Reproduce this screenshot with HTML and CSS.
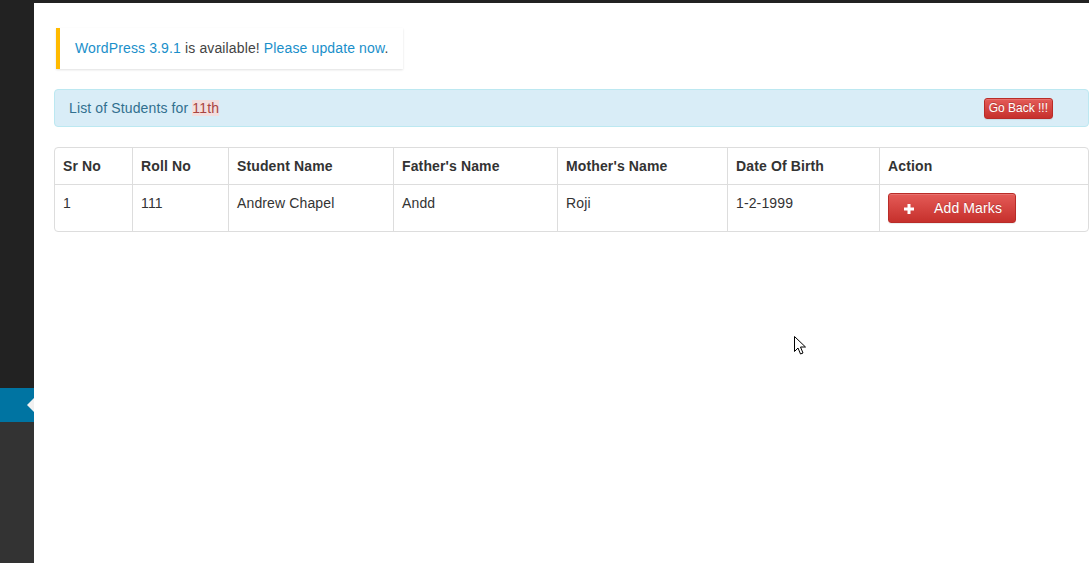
FILE: index.html
```html
<!DOCTYPE html>
<html>
<head>
<meta charset="utf-8">
<link rel="stylesheet" href="styles.css">
</head>
<body>
<div class="layout">
  <aside class="sidebar">
    <div class="menu-top"></div>
    <div class="menu-current"><span class="menu-arrow"></span></div>
    <div class="menu-rest"></div>
  </aside>
  <main class="main">
    <div class="notice"><a class="link">WordPress 3.9.1</a> is available! <a class="link">Please update now</a>.</div>
    <div class="alert">
      <span>List of Students for <span class="grade">11th</span></span>
      <button class="btn btn-xs">Go Back !!!</button>
    </div>
    <table class="students">
      <colgroup>
        <col class="c1"><col class="c2"><col class="c3"><col class="c4"><col class="c5"><col class="c6"><col class="c7">
      </colgroup>
      <thead>
        <tr>
          <th>Sr No</th><th>Roll No</th><th>Student Name</th><th>Father's Name</th><th>Mother's Name</th><th>Date Of Birth</th><th>Action</th>
        </tr>
      </thead>
      <tbody>
        <tr>
          <td>1</td><td>111</td><td>Andrew Chapel</td><td>Andd</td><td>Roji</td><td>1-2-1999</td>
          <td><button class="btn btn-add"><svg class="plus" width="10" height="10" viewBox="0 0 10 10"><rect x="3.5" y="0" width="3" height="10" fill="#fff"/><rect x="0" y="3.5" width="10" height="3" fill="#fff"/></svg>Add Marks</button></td>
        </tr>
      </tbody>
    </table>
    <svg class="cursor" width="13" height="20" viewBox="0 0 13 20">
      <path d="M0.5 0.5 L0.5 15.5 L4 12 L6.5 18 L9 17 L6.5 11 L11.5 11 Z" fill="#fff" stroke="#000" stroke-width="1"/>
    </svg>
  </main>
</div>
</body>
</html>
```
FILE: styles.css
```css
html, body {
  margin: 0;
  padding: 0;
  height: 100%;
}
body {
  font-family: "Liberation Sans", Arial, sans-serif;
  font-size: 14px;
  letter-spacing: 0.13px;
  color: #333;
  background: #fff;
}
.layout {
  display: flex;
  min-height: 100vh;
}
.sidebar {
  width: 34px;
  flex: 0 0 34px;
  display: flex;
  flex-direction: column;
}
.menu-top {
  height: 388px;
  background: #222;
}
.menu-current {
  height: 34px;
  background: #0074a2;
  position: relative;
}
.menu-arrow {
  position: absolute;
  right: 0;
  top: 10px;
  width: 0;
  height: 0;
  border-top: 7px solid transparent;
  border-bottom: 7px solid transparent;
  border-right: 7px solid #f1f1f1;
}
.menu-rest {
  flex: 1;
  background: #333;
}
.main {
  flex: 1;
  border-top: 3px solid #222;
  padding: 25px 0 0 20px;
  position: relative;
  min-width: 0;
}
.notice {
  display: inline-block;
  margin-left: 2px;
  background: #fff;
  border-left: 4px solid #ffba00;
  box-shadow: 0 1px 2px rgba(0,0,0,0.12);
  padding: 11px 15px 11px 15px;
  line-height: 19px;
  color: #444;
}
.link {
  color: #1a8fca;
  text-decoration: none;
}
.alert {
  margin-top: 20px;
  background: #d9edf7;
  border: 1px solid #bce8f1;
  border-radius: 4px;
  color: #31708f;
  padding: 8px 35px 8px 14px;
  line-height: 20px;
  height: 20px;
  display: flex;
  justify-content: space-between;
  align-items: flex-start;
}
.grade {
  background: #f2dede;
  color: #a94442;
}
.btn {
  font-family: "Liberation Sans", Arial, sans-serif;
  color: #fff;
  border: 1px solid #b92c28;
  background: linear-gradient(to bottom, #e45b57 0, #c6302c 100%);
  cursor: pointer;
  box-shadow: inset 0 1px 0 rgba(255,255,255,.15), 0 1px 1px rgba(0,0,0,.075);
  text-shadow: 0 -1px 0 rgba(0,0,0,.2);
}
.btn-xs {
  font-size: 12px;
  letter-spacing: 0;
  line-height: 19px;
  height: 21px;
  padding: 0 4px;
  border-radius: 3px;
}
.students {
  margin-top: 20px;
  width: 100%;
  border-collapse: separate;
  border-spacing: 0;
  border: 1px solid #ddd;
  border-radius: 4px;
  table-layout: fixed;
}
.c1 { width: 77px; }
.c2 { width: 96px; }
.c3 { width: 165px; }
.c4 { width: 164px; }
.c5 { width: 170px; }
.c6 { width: 152px; }
.c7 { width: auto; }
.students th, .students td {
  text-align: left;
  padding: 8px;
  line-height: 20px;
  vertical-align: top;
  border-left: 1px solid #ddd;
}
.students th:first-child, .students td:first-child {
  border-left: none;
}
.students th {
  font-weight: bold;
  color: #333;
  border-bottom: 1px solid #ddd;
}
.students td {
  color: #333;
}
.btn-add {
  font-size: 14px;
  letter-spacing: 0.13px;
  line-height: 20px;
  height: 30px;
  padding: 0 13px 0 15px;
  border-radius: 3px;
  display: inline-flex;
  align-items: center;
}
.plus {
  margin-right: 20px;
  margin-top: 1px;
}
.cursor {
  position: absolute;
  left: 760px;
  top: 333px;
}
```
